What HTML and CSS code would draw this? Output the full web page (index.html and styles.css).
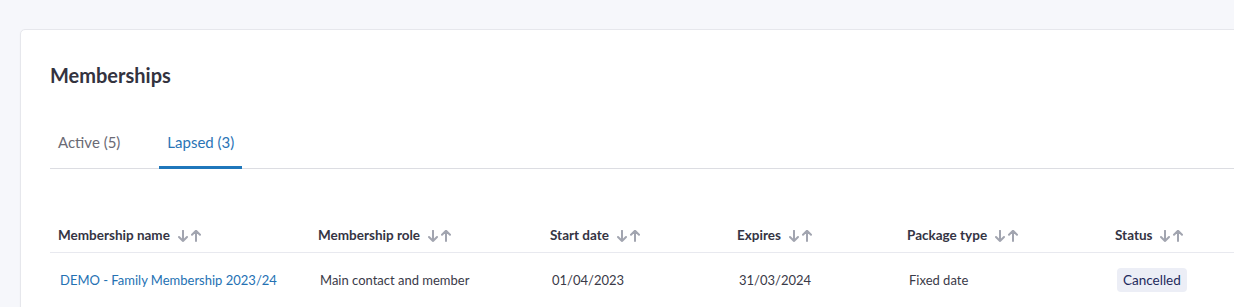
FILE: index.html
```html
<!DOCTYPE html>
<html lang="en">
<head>
<meta charset="utf-8">
<title>Memberships</title>
<link rel="stylesheet" href="styles.css">
</head>
<body>
<div class="page">
  <section class="card">
    <h1 class="title">Memberships</h1>
    <div class="tabs">
      <div class="tab">Active (5)</div>
      <div class="tab tab-active">Lapsed (3)</div>
    </div>
    <table class="grid">
      <colgroup>
        <col class="c1"><col class="c2"><col class="c3"><col class="c4"><col class="c5"><col class="c6">
      </colgroup>
      <thead>
        <tr>
          <th><span class="th">Membership name<span class="sort"><svg viewBox="0 0 24 12" width="24" height="12"><path d="M5 0.8V11M1 7l4 4 4-4M18 11V0.8M14 4.8l4-4 4 4"/></svg></span></span></th>
          <th><span class="th">Membership role<span class="sort"><svg viewBox="0 0 24 12" width="24" height="12"><path d="M5 0.8V11M1 7l4 4 4-4M18 11V0.8M14 4.8l4-4 4 4"/></svg></span></span></th>
          <th><span class="th">Start date<span class="sort"><svg viewBox="0 0 24 12" width="24" height="12"><path d="M5 0.8V11M1 7l4 4 4-4M18 11V0.8M14 4.8l4-4 4 4"/></svg></span></span></th>
          <th><span class="th">Expires<span class="sort"><svg viewBox="0 0 24 12" width="24" height="12"><path d="M5 0.8V11M1 7l4 4 4-4M18 11V0.8M14 4.8l4-4 4 4"/></svg></span></span></th>
          <th><span class="th">Package type<span class="sort"><svg viewBox="0 0 24 12" width="24" height="12"><path d="M5 0.8V11M1 7l4 4 4-4M18 11V0.8M14 4.8l4-4 4 4"/></svg></span></span></th>
          <th><span class="th">Status<span class="sort"><svg viewBox="0 0 24 12" width="24" height="12"><path d="M5 0.8V11M1 7l4 4 4-4M18 11V0.8M14 4.8l4-4 4 4"/></svg></span></span></th>
        </tr>
      </thead>
      <tbody>
        <tr>
          <td><a class="link" href="#">DEMO - Family Membership 2023/24</a></td>
          <td>Main contact and member</td>
          <td>01/04/2023</td>
          <td>31/03/2024</td>
          <td>Fixed date</td>
          <td><span class="badge">Cancelled</span></td>
        </tr>
      </tbody>
    </table>
  </section>
</div>
</body>
</html>
```

FILE: styles.css
```css
html, body {
  margin: 0;
  padding: 0;
  overflow: hidden;
  background: #f6f7fb;
  font-family: Lato, "Noto Sans", sans-serif;
}
.page {
  padding: 29px 0 0 20px;
  width: 1300px;
}
.card {
  background: #ffffff;
  border: 1px solid #e6e7ec;
  border-radius: 5px 0 0 0;
  padding: 33px 0 40px 29px;
  box-shadow: 0 1px 2px rgba(30, 35, 60, 0.04);
}
.title {
  margin: 0;
  font-size: 20px;
  line-height: 24px;
  font-weight: 700;
  color: #33333f;
}
.tabs {
  display: flex;
  gap: 31px;
  margin-top: 36px;
  border-bottom: 1px solid #dcdde2;
  height: 45px;
  align-items: flex-start;
}
.tab {
  padding: 10px 8px 15px;
  font-size: 15px;
  line-height: 18px;
  color: #6a6a74;
  border-bottom: 3px solid transparent;
}
.tab-active {
  color: #2a74b6;
  border-bottom-color: #1f77bb;
}
.grid {
  margin-top: 49px;
  border-collapse: collapse;
  table-layout: fixed;
  width: 1240px;
}
.c1 { width: 260px; }
.c2 { width: 232px; }
.c3 { width: 187px; }
.c4 { width: 170px; }
.c5 { width: 208px; }
.c6 { width: 183px; }
th {
  text-align: left;
  padding: 9px 8px 8px;
  font-size: 13.5px;
  line-height: 17px;
  font-weight: 700;
  color: #343444;
  border-bottom: 1px solid #e8e9ef;
  white-space: nowrap;
}
.th {
  display: inline-flex;
  align-items: center;
}
.sort {
  display: inline-flex;
  margin-left: 8px;
}
.sort svg {
  fill: none;
  stroke: #a2a5b0;
  stroke-width: 2;
  stroke-linecap: round;
  stroke-linejoin: round;
}
td {
  padding: 15px 10px;
  font-size: 13px;
  line-height: 24px;
  color: #3a3a48;
  white-space: nowrap;
  vertical-align: middle;
}
.link {
  color: #2471b3;
  text-decoration: none;
}
.badge {
  display: inline-block;
  background: #eceef6;
  color: #1e2a5c;
  border-radius: 4px;
  padding: 0 6px;
  font-size: 13.5px;
  line-height: 24px;
}
```
